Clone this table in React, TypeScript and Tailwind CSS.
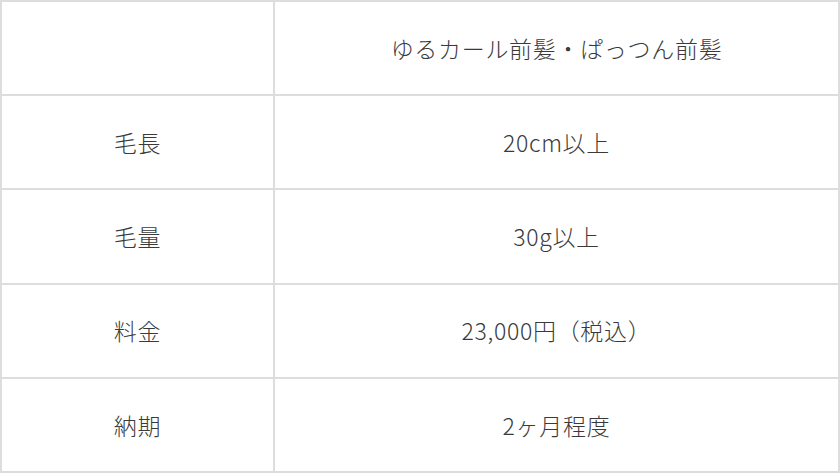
import React from "react";

const rows: [string, string][] = [
  ["", "ゆるカール前髪・ぱっつん前髪"],
  ["毛長", "20cm以上"],
  ["毛量", "30g以上"],
  ["料金", "23,000円（税込）"],
  ["納期", "2ヶ月程度"],
];

export default function App() {
  return (
    <div
      className="w-[840px] h-[473px] bg-white text-[#3a3a3a] border-l-2 border-t-2 border-[#dddddd] flex flex-col"
      style={{ fontFamily: '"Noto Sans CJK JP", "Noto Sans", sans-serif' }}
    >
      {rows.map(([a, b], i) => (
        <div key={i} className="flex flex-1">
          <div className="w-[273px] shrink-0 border-r-2 border-b-2 border-[#dddddd] flex items-center justify-center text-[23px] font-extralight tracking-[0.03em]">
            {a}
          </div>
          <div className="flex-1 border-r-2 border-b-2 border-[#dddddd] flex items-center justify-center text-[23px] font-extralight tracking-[0.03em]">
            {b}
          </div>
        </div>
      ))}
    </div>
  );
}
